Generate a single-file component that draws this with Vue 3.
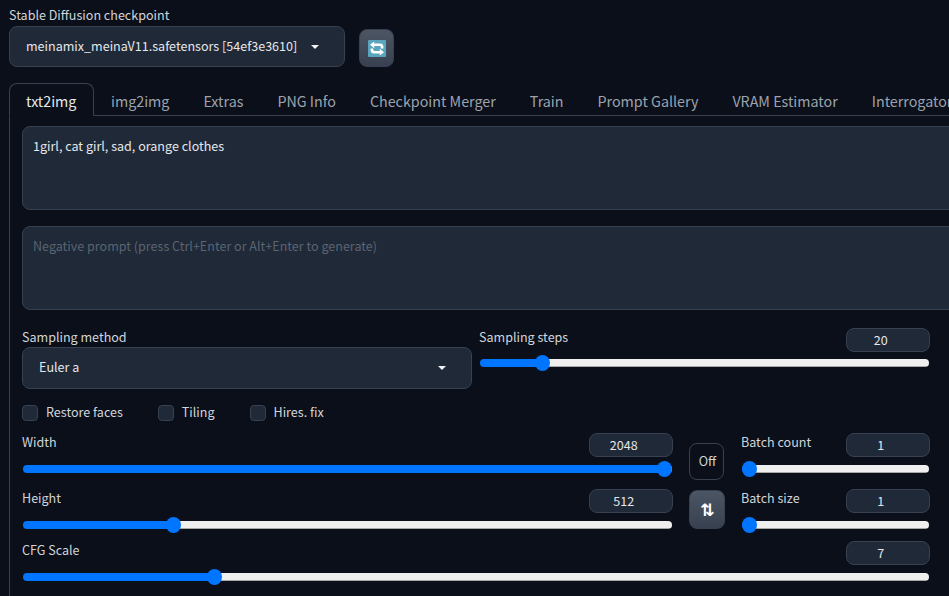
<script setup>
const tabs = [
  "img2img",
  "Extras",
  "PNG Info",
  "Checkpoint Merger",
  "Train",
  "Prompt Gallery",
  "VRAM Estimator",
  "Interrogator",
];
const checks = ["Restore faces", "Tiling", "Hires. fix"];

// fill of the slider track
const fill = (val, min, max) => ({ "--p": (val - min) / (max - min) });
</script>

<template>
  <div class="page">
    <div class="top">
      <div class="checkpoint">
        <div class="label">Stable Diffusion checkpoint</div>
        <div class="select select-top">
          <span>meinamix_meinaV11.safetensors [54ef3e3610]</span>
          <i class="caret"></i>
        </div>
      </div>
      <button class="btn refresh">
        <svg width="18" height="17" viewBox="0 0 18 17">
          <rect width="18" height="17" rx="1" fill="#5ba4bd" />
          <path
            d="M2 4.8 6.2 1.4v2.2H12c2.2 0 3.4 1.3 3.4 3.2v1.7h-2.6V7.2c0-.7-.4-1.1-1.2-1.1H6.2v2.2zM16 12.2l-4.2 3.4v-2.2H6c-2.2 0-3.4-1.3-3.4-3.2V8.5h2.6v1.3c0 .7.4 1.1 1.2 1.1h5.4V8.7z"
            fill="#fff"
          />
        </svg>
      </button>
    </div>

    <div class="tabs">
      <div class="tab active">txt2img</div>
      <div v-for="t in tabs" :key="t" class="tab">{{ t }}</div>
    </div>

    <div class="panel">
      <div class="prompt">1girl, cat girl, sad, orange clothes</div>
      <div class="prompt placeholder">
        Negative prompt (press Ctrl+Enter or Alt+Enter to generate)
      </div>

      <div class="sampling">
        <div class="method">
          <div class="label method-label">Sampling method</div>
          <div class="select select-method">
            <span>Euler a</span>
            <i class="caret"></i>
          </div>
        </div>
        <div class="steps">
          <div class="slider-head steps-head">
            <span class="label">Sampling steps</span>
            <div class="num">20</div>
          </div>
          <input type="range" min="1" max="150" value="20" :style="fill(20, 1, 150)" />
        </div>
      </div>

      <div class="checks">
        <label v-for="c in checks" :key="c" class="check">
          <span class="box"></span>{{ c }}
        </label>
      </div>

      <div class="dims">
        <div class="col-size">
          <div class="block">
            <div class="slider-head">
              <span class="label">Width</span>
              <div class="num">2048</div>
            </div>
            <input type="range" min="64" max="2048" step="8" value="2048" :style="fill(2048, 64, 2048)" />
          </div>
          <div class="block">
            <div class="slider-head">
              <span class="label">Height</span>
              <div class="num">512</div>
            </div>
            <input type="range" min="64" max="2048" step="8" value="512" :style="fill(512, 64, 2048)" />
          </div>
        </div>
        <div class="col-btns">
          <button class="off"><span>Off</span></button>
          <button class="btn swap">⇅</button>
        </div>
        <div class="col-batch">
          <div class="block">
            <div class="slider-head">
              <span class="label">Batch count</span>
              <div class="num">1</div>
            </div>
            <input type="range" min="1" max="100" value="1" :style="fill(1, 1, 100)" />
          </div>
          <div class="block">
            <div class="slider-head">
              <span class="label">Batch size</span>
              <div class="num">1</div>
            </div>
            <input type="range" min="1" max="8" value="1" :style="fill(1, 1, 8)" />
          </div>
        </div>
      </div>

      <div class="cfg">
        <div class="slider-head">
          <span class="label">CFG Scale</span>
          <div class="num">7</div>
        </div>
        <input type="range" min="1" max="30" step="0.5" value="7" :style="fill(7, 1, 30)" />
      </div>
    </div>
  </div>
</template>

<style>
html,
body {
  background: #0b0f19;
  overflow: hidden;
}
</style>

<style scoped>
.page {
  width: 949px;
  height: 596px;
  overflow: hidden;
  box-sizing: border-box;
  padding: 5px 0 0 9px;
  background: #0b0f19;
  color: #e5e7eb;
  font-family: "Noto Sans CJK JP", "Noto Sans", sans-serif;
  font-size: 12.55px;
  line-height: 20px;
}

.label {
  color: #d1d5db;
}
.slider-head .label {
  line-height: 18px;
}

/*----------------------------
* top bar
*----------------------------*/
.top {
  display: flex;
  align-items: flex-end;
  gap: 14px;
}
.checkpoint {
  width: 336px;
}
.checkpoint .label {
  height: 21px;
}
.select {
  display: flex;
  align-items: center;
  justify-content: space-between;
  box-sizing: border-box;
  background: #1f2937;
  border: 1px solid #374151;
  border-radius: 8px;
  color: #e5e7eb;
  white-space: nowrap;
}
.select span {
  margin-bottom: 2px;
}
.select-top {
  height: 41px;
  padding: 0 25px 0 16px;
}
.select-method {
  height: 42px;
  padding: 0 25px 0 16px;
}
.caret {
  width: 0;
  height: 0;
  border-left: 4px solid transparent;
  border-right: 4px solid transparent;
  border-top: 4px solid #f3f4f6;
}
.btn {
  display: flex;
  align-items: center;
  justify-content: center;
  padding: 0;
  box-sizing: border-box;
  border: 1px solid #374151;
  border-radius: 8px;
  background: linear-gradient(to bottom, #4b5563, #374151);
  color: #fff;
  font-family: inherit;
}
.refresh {
  width: 35px;
  height: 38px;
}

/*----------------------------
* tabs
*----------------------------*/
.tabs {
  display: flex;
  height: 33px;
  margin-top: 16px;
  border-bottom: 1px solid #374151;
  box-sizing: border-box;
  white-space: nowrap;
}
.tab {
  flex: none;
  padding: 0 17px;
  line-height: 35px;
  color: #9ca3af;
  font-size: 14.3px;
}
.tab.active {
  width: 85px;
  height: 33px;
  padding: 0 16px;
  box-sizing: border-box;
  border: 1px solid #374151;
  border-bottom-color: #0b0f19;
  border-radius: 8px 8px 0 0;
  color: #e5e7eb;
  line-height: 33px;
}

/*----------------------------
* panel
*----------------------------*/
.panel {
  height: 500px;
  box-sizing: border-box;
  padding: 10px 0 0 12px;
  border-left: 1px solid #374151;
}
.prompt {
  box-sizing: border-box;
  width: 960px;
  height: 84px;
  padding: 9px 10px;
  margin-bottom: 16px;
  background: #1f2937;
  border: 1px solid #374151;
  border-radius: 8px;
  color: #e5e7eb;
}
.placeholder {
  color: #5b6472;
}

.sampling {
  display: flex;
  gap: 7px;
  width: 908px;
  margin-top: 18px;
}
.method {
  width: 450px;
}
.method-label {
  height: 19px;
  line-height: 18px;
}
.steps {
  flex: 1;
}
.slider-head {
  display: flex;
  align-items: flex-start;
  justify-content: space-between;
  height: 24px;
  margin-bottom: 4px;
}
.steps-head {
  margin-bottom: 3px;
}
.num {
  box-sizing: border-box;
  width: 84px;
  height: 24px;
  padding-right: 14.5px;
  background: #1f2937;
  border: 1px solid #374151;
  border-radius: 8px;
  text-align: center;
  line-height: 22px;
  color: #e5e7eb;
}

/*----------------------------
* sliders
*----------------------------*/
input[type="range"] {
  -webkit-appearance: none;
  appearance: none;
  display: block;
  width: calc(100% - 2px);
  height: 16px;
  margin: 0 1px;
  background: transparent;
}
input[type="range"]::-webkit-slider-runnable-track {
  height: 8px;
  border-radius: 4px;
  background:
    linear-gradient(
      to right,
      #0075ff calc(7.5px + (100% - 15px) * var(--p)),
      transparent calc(7.5px + (100% - 15px) * var(--p))
    ),
    linear-gradient(to bottom, #efefef 7px, #a8a8a8 7px);
}
input[type="range"]::-webkit-slider-thumb {
  -webkit-appearance: none;
  width: 15px;
  height: 16px;
  margin-top: -4px;
  border-radius: 50%;
  background: #0075ff;
}

.checks {
  display: flex;
  margin-top: 16px;
}
.check {
  display: flex;
  align-items: flex-start;
  gap: 8px;
  height: 16px;
  margin-right: 35px;
  color: #d1d5db;
  line-height: 14px;
}
.box {
  width: 16px;
  height: 16px;
  box-sizing: border-box;
  background: #1f2937;
  border: 1px solid #374151;
  border-radius: 4px;
}

.dims {
  display: flex;
  gap: 16px;
  width: 908px;
  margin-top: 12px;
}
.col-size {
  width: 651px;
}
.col-batch {
  flex: 1;
}
.block {
  margin-bottom: 12px;
}
.col-btns {
  display: flex;
  flex-direction: column;
  gap: 10px;
  width: 36px;
  padding-top: 10px;
}
.off {
  box-sizing: border-box;
  width: 35px;
  height: 37px;
  padding: 0 0 2px 2px;
  background: #0b0f19;
  border: 1px solid #374151;
  border-radius: 8px;
  color: #d1d5db;
  font-family: inherit;
  font-size: 12.55px;
}
.swap {
  width: 36px;
  height: 39px;
  font-family: "DejaVu Sans", sans-serif;
  font-size: 17px;
  font-weight: 700;
}
.cfg {
  width: 908px;
  margin-top: -4px;
}
</style>
